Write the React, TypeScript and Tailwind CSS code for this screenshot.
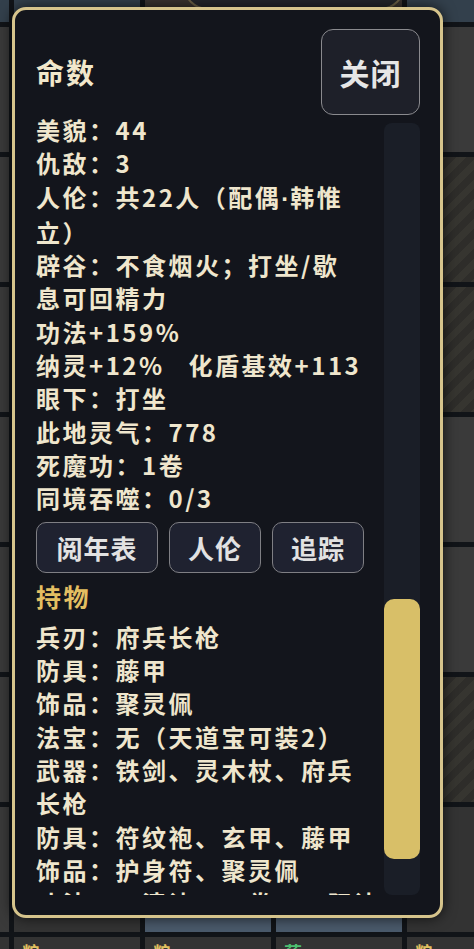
import React from "react";

const FONT = '"Noto Sans CJK SC", "Noto Sans", sans-serif';

type Cell = { cls: string; label?: string; labelCls?: string };

const GREY = "bg-[#3a3a3a]";
const DARK = "bg-[#333333]";
const SLATE = "bg-[#33404c]";
const BLUE = "bg-[#4a5a6b]";
const HATCH =
  "bg-[repeating-linear-gradient(135deg,#2e2d2a_0px,#2e2d2a_7px,#363530_7px,#363530_14px)]";

const rows: Cell[][] = [
  [{ cls: SLATE }, { cls: SLATE }, { cls: "bg-[#3a3431]" }, { cls: "bg-[#3a3431]" }, { cls: SLATE }],
  [{ cls: GREY }, { cls: GREY }, { cls: GREY }, { cls: GREY }, { cls: GREY }],
  [{ cls: GREY }, { cls: GREY }, { cls: GREY }, { cls: GREY }, { cls: HATCH }],
  [{ cls: GREY }, { cls: GREY }, { cls: GREY }, { cls: GREY }, { cls: HATCH }],
  [{ cls: GREY }, { cls: GREY }, { cls: GREY }, { cls: GREY }, { cls: GREY }],
  [{ cls: GREY }, { cls: GREY }, { cls: GREY }, { cls: GREY }, { cls: GREY }],
  [{ cls: GREY }, { cls: GREY }, { cls: GREY }, { cls: GREY }, { cls: HATCH }],
  [{ cls: GREY }, { cls: DARK }, { cls: BLUE }, { cls: BLUE }, { cls: DARK }],
  [
    { cls: DARK, label: "粮", labelCls: "text-[#e0c060]" },
    { cls: DARK, label: "粮", labelCls: "text-[#e0c060]" },
    { cls: DARK, label: "粮", labelCls: "text-[#e0c060]" },
    { cls: DARK, label: "药", labelCls: "text-[#4cc070]" },
    { cls: DARK, label: "粮", labelCls: "text-[#e0c060]" },
  ],
];

const statLines: React.ReactNode[] = [
  "美貌：44",
  "仇敌：3",
  <span key="rl">
    人伦：共22人（配偶
    <span className="font-['Liberation_Sans'] tracking-[1px]">·</span>
    韩惟
  </span>,
  "立）",
  "辟谷：不食烟火；打坐/歇",
  "息可回精力",
  "功法+159%",
  <div key="nl" className="flex gap-[24px]">
    <span>纳灵+12%</span>
    <span>化盾基效+113</span>
  </div>,
  "眼下：打坐",
  "此地灵气：778",
  "死魔功：1卷",
  "同境吞噬：0/3",
];

const itemLines = [
  "兵刃：府兵长枪",
  "防具：藤甲",
  "饰品：聚灵佩",
  "法宝：无（天道宝可装2）",
  "武器：铁剑、灵木杖、府兵",
  "长枪",
  "防具：符纹袍、玄甲、藤甲",
  "饰品：护身符、聚灵佩",
  "功法：三清诀、一卷、三阳诀",
];

function Line({ children }: { children: React.ReactNode }) {
  return <div className="whitespace-nowrap leading-[33.3px]">{children}</div>;
}

export default function App() {
  return (
    <div
      className="relative w-[474px] h-[949px] overflow-hidden bg-[#111418]"
      style={{ fontFamily: FONT }}
    >
      {/* background map grid */}
      <div className="ml-[-117px] mt-[-103px] flex flex-col gap-[5px]">
        {rows.map((r, i) => (
          <div key={i} className="flex gap-[5px]">
            {r.map((c, j) => (
              <div key={j} className={`w-[126px] h-[125px] shrink-0 ${c.cls} px-[8px] pt-[2px]`}>
                {c.label && (
                  <span className={`text-[18px] font-bold ${c.labelCls}`}>{c.label}</span>
                )}
              </div>
            ))}
          </div>
        ))}
      </div>

      {/* top pill peeking */}
      <div className="absolute left-[183px] top-[-40px] w-[222px] h-[50px] rounded-[25px] bg-[#24262c] border-[2px] border-[#6d6247]" />

      {/* modal */}
      <div className="absolute left-[12px] top-[7px] w-[431px] h-[911px] rounded-[14px] border-[3px] border-[#d6c48c] bg-[#13151c] shadow-[0_0_14px_rgba(0,0,0,0.7)] flex flex-col pl-[21px] pr-[20px] pt-[19px] pb-[20px]">
        <div className="h-[86px] flex items-center justify-between shrink-0">
          <div className="text-[28px] font-bold text-[#f2e8cc] tracking-[2px]">命数</div>
          <button className="w-[99px] h-[86px] rounded-[12px] border-[1.5px] border-[#8a8a8e] bg-[#1e2029] text-[30px] font-semibold text-[#e6e6e6] tracking-[1px]">
            关闭
          </button>
        </div>

        <div className="flex-1 min-h-0 flex">
          <div className="w-[340px] overflow-hidden text-[24px] font-bold tracking-[2.5px] text-[#efe6cd]">
            <div className="mt-[-2px]">
              {statLines.map((l, i) => (
                <Line key={i}>{l}</Line>
              ))}
              <div className="mt-[7px] flex gap-[11px]">
                {["阅年表", "人伦", "追踪"].map((t, i) => (
                  <button
                    key={t}
                    className={`${i === 0 ? "w-[122px]" : "w-[92px]"} h-[51px] rounded-[10px] border-[1.5px] border-[#7f7f84] bg-[#1f2230] text-[26px] font-semibold tracking-[1px] text-[#e2e2e2]`}
                  >
                    {t}
                  </button>
                ))}
              </div>
              <div className="mt-[7px] leading-[33.3px] text-[25px] font-bold text-[#e3bf62]">持物</div>
              <div className="mt-[7px]">
                {itemLines.map((l, i) => (
                  <Line key={i}>{l}</Line>
                ))}
              </div>
            </div>
          </div>
          <div className="ml-auto mt-[8px] w-[36px] rounded-[8px] bg-[#1a1e27] pt-[476px]">
            <div className="h-[260px] rounded-[10px] bg-[#d8bf68]" />
          </div>
        </div>
      </div>
    </div>
  );
}
